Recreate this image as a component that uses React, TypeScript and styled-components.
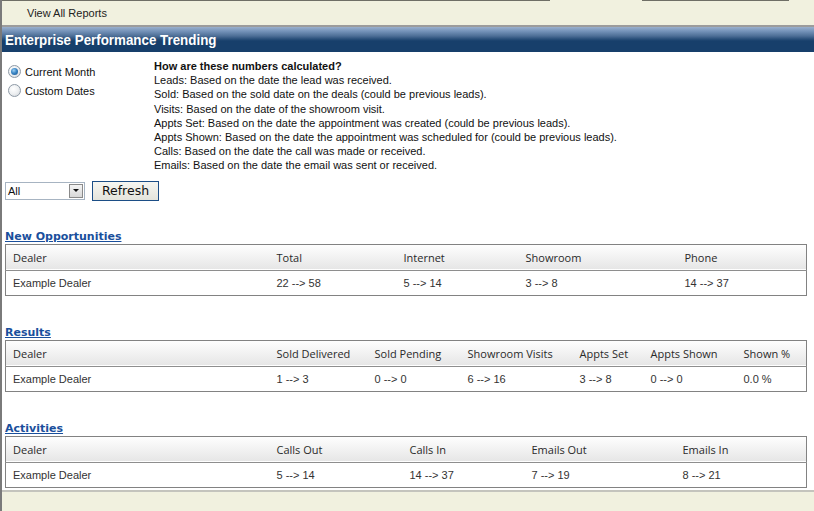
import React from "react";
import styled, { createGlobalStyle } from "styled-components";

const Global = createGlobalStyle`
  html, body { margin: 0; padding: 0; background: #ffffff; }
  body { font-family: "Liberation Sans", Arial, sans-serif; }
`;

const Page = styled.div`
  width: 814px;
  height: 511px;
  box-sizing: border-box;
  border-left: 2px solid #7a7a7a;
  display: flex;
  flex-direction: column;
  overflow: hidden;
`;

const TopBar = styled.div`
  height: 27px;
  box-sizing: border-box;
  background: #f1f1df;
  border-bottom: 2px solid #9c9c9c;
  position: relative;
  display: flex;
  align-items: center;
  padding-left: 25px;
  font-size: 11px;
  color: #222;
`;

const TopEdge = styled.div<{ $left: number; $width: number }>`
  position: absolute;
  top: 0;
  left: ${(p) => p.$left}px;
  width: ${(p) => p.$width}px;
  height: 1px;
  background: #6f6f66;
`;

const TitleBar = styled.div`
  height: 25px;
  box-sizing: border-box;
  background: linear-gradient(
    to bottom,
    #9ab0cd 0px,
    #7694ba 4px,
    #4d6e96 9px,
    #2a4f7a 12px,
    #173f6b 14px,
    #173f6b 100%
  );
  display: flex;
  align-items: center;
  padding-left: 3px;
  color: #ffffff;
`;

const TitleText = styled.span`
  display: inline-block;
  font-family: "Liberation Sans", Arial, sans-serif;
  font-weight: bold;
  font-size: 15px;
  transform: scaleX(0.89);
  transform-origin: left center;
  white-space: nowrap;
`;

const Content = styled.div`
  padding: 7px 8px 0 3px;
  display: flex;
  flex-direction: column;
`;

const OptionsRow = styled.div`
  display: flex;
  align-items: flex-start;
`;

const RadioColumn = styled.div`
  width: 149px;
  display: flex;
  flex-direction: column;
  gap: 6px;
  padding-top: 6px;
`;

const RadioLabel = styled.label`
  display: flex;
  align-items: center;
  gap: 4px;
  font-size: 11px;
  color: #111;
  padding-left: 3px;
`;

const Radio = styled.span<{ $checked?: boolean }>`
  width: 11px;
  height: 11px;
  border-radius: 50%;
  border: 1px solid #8e9aa6;
  background: radial-gradient(circle at 40% 35%, #ffffff 0%, #eef0f2 50%, #cfd3d8 100%);
  display: flex;
  align-items: center;
  justify-content: center;
  &::after {
    content: "";
    display: ${(p) => (p.$checked ? "block" : "none")};
    width: 7px;
    height: 7px;
    border-radius: 50%;
    background: radial-gradient(circle at 40% 35%, #9fd0f3 0%, #3a86c5 45%, #17508a 100%);
  }
`;

const Explain = styled.div`
  font-size: 11px;
  line-height: 14.2px;
  color: #111;
`;

const ExplainTitle = styled.div`
  font-weight: bold;
`;

const ControlRow = styled.div`
  display: flex;
  align-items: center;
  gap: 7px;
  margin-top: 8px;
`;

const SelectBox = styled.div`
  width: 76px;
  height: 16px;
  border: 1px solid #a7b4c2;
  display: flex;
  align-items: center;
  justify-content: space-between;
  font-size: 11px;
  color: #111;
  padding-left: 2px;
  box-sizing: content-box;
`;

const Arrow = styled.span`
  width: 14px;
  height: 14px;
  margin-right: 1px;
  border: 1px solid #8a8a8a;
  box-sizing: border-box;
  background: linear-gradient(#f4f4f4, #d8d8d8);
  display: flex;
  align-items: center;
  justify-content: center;
  &::after {
    content: "";
    border-left: 3px solid transparent;
    border-right: 3px solid transparent;
    border-top: 3px solid #111;
  }
`;

const Button = styled.button`
  width: 67px;
  height: 20px;
  border: 1px solid #1c4e86;
  background: linear-gradient(#f6f6f1, #e4e4dc);
  font-family: "DejaVu Sans", Verdana, sans-serif;
  font-size: 12.5px;
  color: #111;
  padding: 0;
  display: flex;
  align-items: center;
  justify-content: center;
`;

const Section = styled.div<{ $top: number }>`
  margin-top: ${(p) => p.$top}px;
`;

const SectionLink = styled.a`
  display: block;
  font-family: "DejaVu Sans", Verdana, sans-serif;
  font-weight: bold;
  font-size: 11px;
  color: #1a4f9c;
  text-decoration: underline;
  line-height: 13px;
  margin-bottom: 1px;
`;

const Table = styled.table`
  width: 801px;
  border-collapse: collapse;
  border: 1px solid #828282;
  table-layout: fixed;
`;

const HeadRow = styled.tr`
  background: linear-gradient(#ffffff, #e6e6e6);
  border-bottom: 1px solid #8e8e8e;
`;

const Th = styled.th`
  height: 25px;
  padding: 0 0 0 7px;
  text-align: left;
  font-family: "Open Sans", "Noto Sans", sans-serif;
  font-weight: normal;
  font-size: 11px;
  color: #2a2a2a;
`;

const Td = styled.td`
  height: 24px;
  padding: 0 0 0 7px;
  font-family: "Liberation Sans", Arial, sans-serif;
  font-size: 11px;
  color: #333;
`;

const Footer = styled.div`
  flex: 1;
  margin-top: 2px;
  background: #f1f1df;
  border-top: 2px solid #c4c4bd;
`;

type Col = { label: string; width: number; value: string };

const DataTable = ({ cols }: { cols: Col[] }) => (
  <Table>
    <colgroup>
      <col style={{ width: 264 }} />
      {cols.map((c) => (
        <col key={c.label} style={{ width: c.width }} />
      ))}
    </colgroup>
    <thead>
      <HeadRow>
        <Th>Dealer</Th>
        {cols.map((c) => (
          <Th key={c.label}>{c.label}</Th>
        ))}
      </HeadRow>
    </thead>
    <tbody>
      <tr>
        <Td>Example Dealer</Td>
        {cols.map((c) => (
          <Td key={c.label}>{c.value}</Td>
        ))}
      </tr>
    </tbody>
  </Table>
);

const opportunities: Col[] = [
  { label: "Total", width: 127, value: "22 --> 58" },
  { label: "Internet", width: 122, value: "5 --> 14" },
  { label: "Showroom", width: 159, value: "3 --> 8" },
  { label: "Phone", width: 129, value: "14 --> 37" },
];

const results: Col[] = [
  { label: "Sold Delivered", width: 98, value: "1 --> 3" },
  { label: "Sold Pending", width: 93, value: "0 --> 0" },
  { label: "Showroom Visits", width: 112, value: "6 --> 16" },
  { label: "Appts Set", width: 71, value: "3 --> 8" },
  { label: "Appts Shown", width: 93, value: "0 --> 0" },
  { label: "Shown %", width: 70, value: "0.0 %" },
];

const activities: Col[] = [
  { label: "Calls Out", width: 133, value: "5 --> 14" },
  { label: "Calls In", width: 122, value: "14 --> 37" },
  { label: "Emails Out", width: 151, value: "7 --> 19" },
  { label: "Emails In", width: 131, value: "8 --> 21" },
];

const explanations = [
  "Leads: Based on the date the lead was received.",
  "Sold: Based on the sold date on the deals (could be previous leads).",
  "Visits: Based on the date of the showroom visit.",
  "Appts Set: Based on the date the appointment was created (could be previous leads).",
  "Appts Shown: Based on the date the appointment was scheduled for (could be previous leads).",
  "Calls: Based on the date the call was made or received.",
  "Emails: Based on the date the email was sent or received.",
];

export default function App() {
  return (
    <>
      <Global />
      <Page>
        <TopBar>
          <TopEdge $left={0} $width={548} />
          <TopEdge $left={640} $width={147} />
          View All Reports
        </TopBar>
        <TitleBar>
          <TitleText>Enterprise Performance Trending</TitleText>
        </TitleBar>
        <Content>
          <OptionsRow>
            <RadioColumn>
              <RadioLabel>
                <Radio $checked />
                Current Month
              </RadioLabel>
              <RadioLabel>
                <Radio />
                Custom Dates
              </RadioLabel>
            </RadioColumn>
            <Explain>
              <ExplainTitle>How are these numbers calculated?</ExplainTitle>
              {explanations.map((e) => (
                <div key={e}>{e}</div>
              ))}
            </Explain>
          </OptionsRow>
          <ControlRow>
            <SelectBox>
              All
              <Arrow />
            </SelectBox>
            <Button>Refresh</Button>
          </ControlRow>
          <Section $top={29}>
            <SectionLink>New Opportunities</SectionLink>
            <DataTable cols={opportunities} />
          </Section>
          <Section $top={30}>
            <SectionLink>Results</SectionLink>
            <DataTable cols={results} />
          </Section>
          <Section $top={30}>
            <SectionLink>Activities</SectionLink>
            <DataTable cols={activities} />
          </Section>
        </Content>
        <Footer />
      </Page>
    </>
  );
}
